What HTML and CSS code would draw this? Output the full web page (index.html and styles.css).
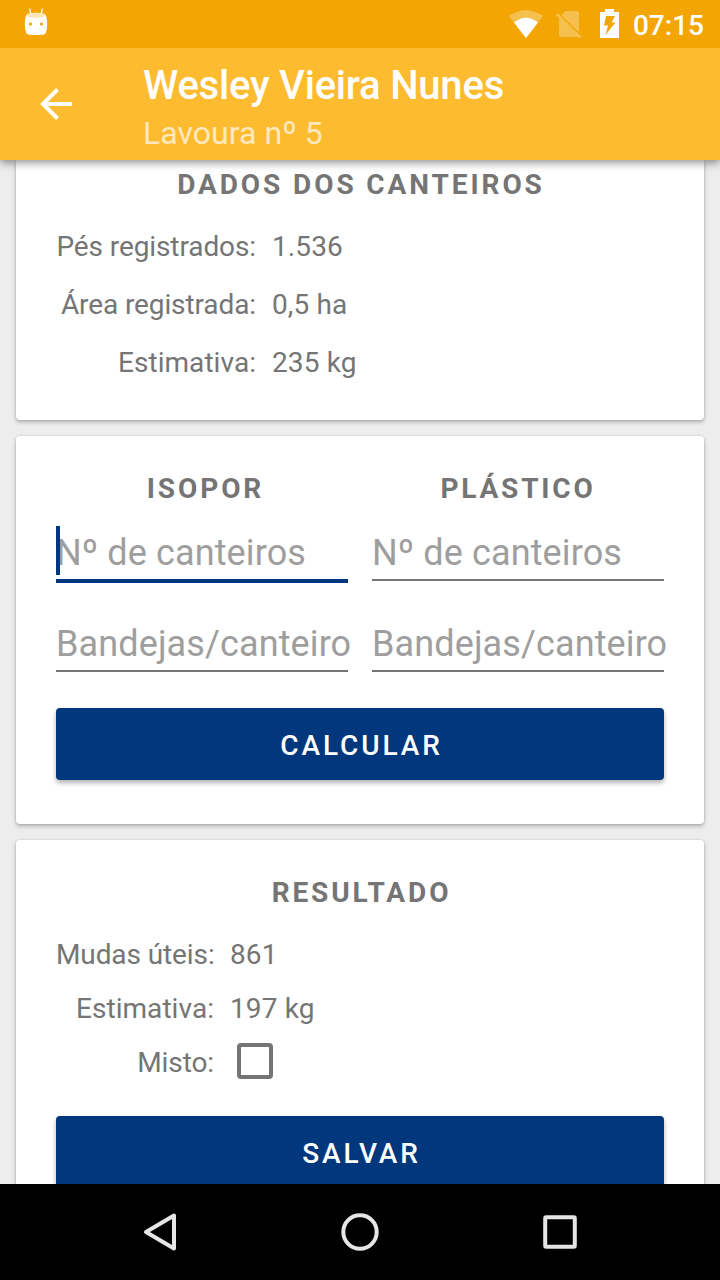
FILE: index.html
```html
<!DOCTYPE html>
<html lang="pt-BR">
<head>
<meta charset="utf-8">
<title>Lavoura nº 5</title>
<link rel="stylesheet" href="styles.css">
</head>
<body>
<div class="screen">
  <div class="status-bar">
    <svg class="status-app" width="24" height="28" viewBox="0 0 24 28">
      <path d="M5.800 1.200 6.700 6M18.200 1.200 17.300 6" stroke="#fff" stroke-width="1.500" stroke-linecap="round" opacity=".9"/>
      <path d="M3.500 6Q12 3.600 20.500 6Q23 7 23.300 16Q23.400 22 21.500 25.500Q20.500 27 12 27Q3.500 27 2.500 25.500Q.6 22 .7 16Q1 7 3.500 6Z" fill="#fff"/>
      <ellipse cx="12" cy="7.300" rx="9.500" ry="2.400" fill="#fce4b4"/>
      <circle cx="6.500" cy="16" r="1.600" fill="#f3a503"/><circle cx="17.500" cy="16" r="1.600" fill="#f3a503"/>
    </svg>
    <div class="status-icons">
      <svg class="wifi" width="35" height="29" viewBox="0 0 35 29">
        <path d="M0 6Q17-5.500 34 6L17 28Z" fill="#fff" opacity=".3"/>
        <path d="M5 12.500Q17 2.800 29 12.500L17 28Z" fill="#fff"/>
      </svg>
      <svg class="sim" width="26" height="28" viewBox="0 0 26 28">
        <g opacity=".3">
          <path d="M9.300 0H20.500Q23 0 23 2.500V21.600L5.600 4.200Z" fill="#fff"/>
          <path d="M3 5 23.500 25.600Q22.500 26 21.500 26H5.500Q3 26 3 23.500Z" fill="#fff"/>
          <path d="M.7 2.900 24.500 26.700" stroke="#fff" stroke-width="2.400"/>
        </g>
      </svg>
      <svg class="battery" width="19" height="29" viewBox="0 0 19 29">
        <path fill-rule="evenodd" fill="#fff" d="M5 0H14V3H19V29H0V3H5ZM6 7 4 16.500H8L5.500 26 15.500 13.500H11.500L15 7Z"/>
      </svg>
      <span class="clock">07:15</span>
    </div>
  </div>
  <header class="app-bar">
    <svg class="back" width="32" height="32" viewBox="0 0 32 32">
      <path d="M32 16H4M17.500 1.500 3 16 17.500 30.500" fill="none" stroke="#fff" stroke-width="4"/>
    </svg>
    <div class="titles">
      <h1 class="title">Wesley Vieira Nunes</h1>
      <div class="subtitle">Lavoura nº 5</div>
    </div>
  </header>
  <main class="content">
    <section class="card card-data">
      <h2 class="heading">DADOS DOS CANTEIROS</h2>
      <dl class="facts">
        <dt>Pés registrados:</dt><dd>1.536</dd>
        <dt>Área registrada:</dt><dd>0,5 ha</dd>
        <dt class="estimate">Estimativa:</dt><dd>235 kg</dd>
      </dl>
    </section>
    <section class="card card-form">
      <div class="columns">
        <div class="column">
          <h2 class="heading heading-isopor">ISOPOR</h2>
          <div class="field focused"><span class="hint">Nº de canteiros</span><span class="caret"></span></div>
          <div class="field"><span class="hint">Bandejas/canteiro</span></div>
        </div>
        <div class="column">
          <h2 class="heading heading-plastico">PLÁSTICO</h2>
          <div class="field"><span class="hint">Nº de canteiros</span></div>
          <div class="field"><span class="hint">Bandejas/canteiro</span></div>
        </div>
      </div>
      <button class="button">CALCULAR</button>
    </section>
    <section class="card card-result">
      <h2 class="heading heading-result">RESULTADO</h2>
      <dl class="facts facts-result">
        <dt>Mudas úteis:</dt><dd>861</dd>
        <dt class="estimate">Estimativa:</dt><dd>197 kg</dd>
        <dt>Misto:</dt><dd class="check-cell"><span class="checkbox"></span></dd>
      </dl>
      <button class="button">SALVAR</button>
    </section>
  </main>
  <nav class="nav-bar">
    <svg width="40" height="40" viewBox="0 0 40 40"><path d="M34 3.500V36.500L6 20Z" fill="none" stroke="#e6e6e6" stroke-width="4" stroke-linejoin="round"/></svg>
    <svg width="40" height="40" viewBox="0 0 40 40"><circle cx="20" cy="20" r="16.700" fill="none" stroke="#e6e6e6" stroke-width="4"/></svg>
    <svg width="40" height="40" viewBox="0 0 40 40"><rect x="5.200" y="5.200" width="29.600" height="29.600" rx="1" fill="none" stroke="#e6e6e6" stroke-width="4"/></svg>
  </nav>
</div>
</body>
</html>
```
FILE: styles.css
```css
* { box-sizing: border-box; margin: 0; padding: 0; }

body { font-family: Roboto, "Liberation Sans", sans-serif; color: #757575; overflow: hidden; }

svg { display: block; flex: none; }

.screen { width: 720px; height: 1280px; display: flex; flex-direction: column; background: #ededed; }

.status-bar {
  flex: none; height: 48px; background: #f3a503; z-index: 3;
  display: flex; justify-content: space-between; align-items: flex-start;
  padding: 0 16px 0 24px;
}
.status-app { margin-top: 8px; }
.status-icons { display: flex; align-items: flex-start; }
.wifi { margin: 10px 12px 0 0; }
.sim { margin: 11px 18px 0 0; }
.battery { margin: 9px 14px 0 0; }
.clock { font-size: 28px; font-weight: 500; line-height: 52px; color: #fff; }

.app-bar {
  flex: none; height: 112px; background: #fdbb30; z-index: 2;
  display: flex; align-items: center; padding-left: 40px; gap: 71px;
  box-shadow: 0 3px 8px rgba(0, 0, 0, .42);
}
.titles { padding-top: 11px; color: #fff; }
.title { font-size: 40px; font-weight: 500; line-height: 48px; letter-spacing: -.21px; }
.subtitle { font-size: 32px; line-height: 47px; letter-spacing: .05px; color: rgba(255, 255, 255, .7); }

.content { flex: 1; min-height: 0; overflow: hidden; padding: 0 16px; display: flex; flex-direction: column; gap: 16px; }

.card { flex: none; background: #fff; border-radius: 4px; padding: 33px 40px 0; box-shadow: 0 2px 4px rgba(0, 0, 0, .28), 0 0 2px rgba(0, 0, 0, .12); }
.card-data { height: 260px; padding-top: 5px; border-radius: 0 0 4px 4px; }
.card-form { height: 388px; }
.card-result { height: 430px; }

.heading { font-size: 28px; font-weight: 700; line-height: 40px; letter-spacing: 2.9px; text-align: center; padding-left: 2px; }
.heading-result { padding-left: 3px; }
.heading-isopor { padding-left: 7px; }
.heading-plastico { padding-left: 0; letter-spacing: 2.8px; }

.facts { display: grid; grid-template-columns: 200px 1fr; grid-auto-rows: 58px; column-gap: 16px; font-size: 28px; line-height: 58px; margin-top: 13px; white-space: nowrap; }
.facts dt { text-align: right; letter-spacing: -.1px; }
.facts .estimate { letter-spacing: .05px; }
.facts dd { letter-spacing: .12px; }
.facts-result { grid-template-columns: 158px 1fr; grid-auto-rows: 54px; line-height: 54px; margin-top: 15px; }
.check-cell { display: flex; align-items: center; padding: 0 0 4px 7px; }
.checkbox { width: 36px; height: 36px; border: 4px solid #757575; border-radius: 4px; }

.columns { display: grid; grid-template-columns: 1fr 1fr; gap: 24px; }
.column { display: flex; flex-direction: column; min-width: 0; }

.field { position: relative; height: 72px; margin-bottom: 19px; border-bottom: 2px solid #757575; font-size: 36px; line-height: 50px; padding-top: 19px; white-space: nowrap; letter-spacing: .12px; color: #9e9e9e; }
.field:last-child { margin-bottom: 18px; }
.focused { height: 74px; margin-bottom: 17px; border-bottom: 4px solid #00377d; }
.caret { position: absolute; left: 0; top: 17px; width: 4px; height: 49px; background: #00377d; }

.button {
  display: block; width: 100%; height: 72px; border: 0; border-radius: 4px; background: #00377d; color: #fff;
  font-family: inherit; font-size: 28px; font-weight: 500; line-height: 68px; letter-spacing: 2.9px;
  padding: 4px 0 0 3px;
  box-shadow: 0 3px 5px rgba(0, 0, 0, .3);
}
.card-form .button { margin-top: 18px; }
.card-result .button { margin-top: 26px; }

.nav-bar { flex: none; height: 96px; background: #000; z-index: 2; display: flex; align-items: center; justify-content: center; gap: 160px; }
```
